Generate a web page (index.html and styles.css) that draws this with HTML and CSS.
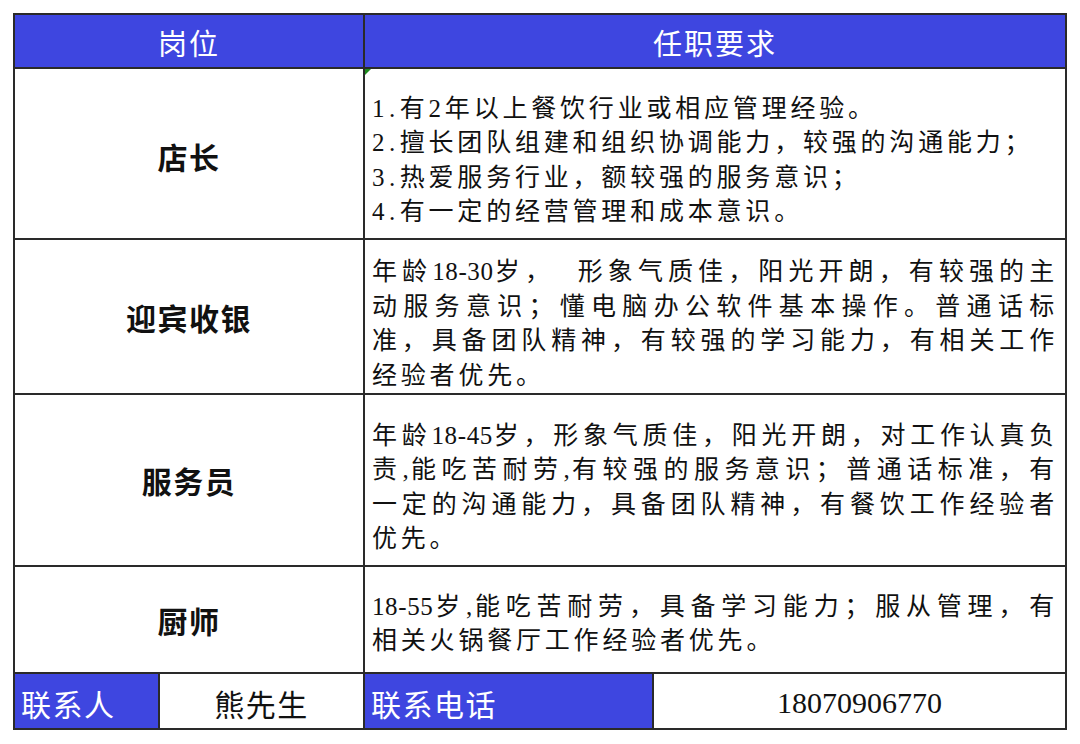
FILE: index.html
```html
<!DOCTYPE html>
<html lang="zh-CN">
<head>
<meta charset="utf-8">
<title>招聘岗位</title>
<link rel="stylesheet" href="styles.css">
</head>
<body>
<div class="sheet">
  <div class="cell head c-left">岗位</div>
  <div class="cell head c-right">任职要求</div>

  <div class="cell label c-left r1">店长</div>
  <div class="cell req c-right r1">
    <span class="flag"></span>
    <div class="txt">
      <div><span class="idx">1.</span>有2年以上餐饮行业或相应管理经验。</div>
      <div><span class="idx">2.</span>擅长团队组建和组织协调能力，较强的沟通能力；</div>
      <div><span class="idx">3.</span>热爱服务行业，额较强的服务意识；</div>
      <div><span class="idx">4.</span>有一定的经营管理和成本意识。</div>
    </div>
  </div>

  <div class="cell label c-left r2">迎宾收银</div>
  <div class="cell req c-right r2">
    <div class="txt">
      <div class="just">年龄<span class="num">18-30</span>岁，&nbsp;&nbsp;形象气质佳，阳光开朗，有较强的主</div>
      <div class="just">动服务意识；懂电脑办公软件基本操作。普通话标</div>
      <div class="just">准，具备团队精神，有较强的学习能力，有相关工作</div>
      <div>经验者优先。</div>
    </div>
  </div>

  <div class="cell label c-left r3">服务员</div>
  <div class="cell req c-right r3">
    <div class="txt">
      <div class="just">年龄<span class="num">18-45</span>岁，形象气质佳，阳光开朗，对工作认真负</div>
      <div class="just">责<span class="num">,</span>能吃苦耐劳<span class="num">,</span>有较强的服务意识；普通话标准，有</div>
      <div class="just">一定的沟通能力，具备团队精神，有餐饮工作经验者</div>
      <div>优先。</div>
    </div>
  </div>

  <div class="cell label c-left r4">厨师</div>
  <div class="cell req c-right r4">
    <div class="txt">
      <div class="just"><span class="num">18-55</span>岁<span class="num">,</span>能吃苦耐劳，具备学习能力；服从管理，有</div>
      <div>相关火锅餐厅工作经验者优先。</div>
    </div>
  </div>

  <div class="cell foot blue">联系人</div>
  <div class="cell foot name">熊先生</div>
  <div class="cell foot blue">联系电话</div>
  <div class="cell foot phone">18070906770</div>
</div>
</body>
</html>
```

FILE: styles.css
```css
* { box-sizing: border-box; }

html, body {
  margin: 0;
  background: #ffffff;
}

body {
  padding: 13px 0 0 13px;
  font-family: "Liberation Serif", "Noto Sans CJK SC", serif;
  color: #111111;
}

.sheet {
  width: 1054px;
  display: grid;
  grid-template-columns: 145px 205px 289px 413px;
  grid-template-rows: 54px 171px 155px 172px 107px 56px;
  border-top: 2px solid #2a2a2a;
  border-left: 2px solid #2a2a2a;
}

.cell {
  border-right: 2px solid #2a2a2a;
  border-bottom: 2px solid #2a2a2a;
  display: flex;
  align-items: center;
  position: relative;
}

.c-left { grid-column: 1 / 3; }
.c-right { grid-column: 3 / 5; }

.head {
  background: #3e46e0;
  color: #ffffff;
  justify-content: center;
  font-family: "Noto Sans CJK SC", sans-serif;
  font-size: 29px;
  letter-spacing: 2px;
  padding-top: 2px;
}

.label {
  justify-content: center;
  font-family: "Noto Sans CJK SC", sans-serif;
  font-weight: 700;
  font-size: 30px;
  letter-spacing: 1.5px;
  color: #111111;
}

.r1 { padding-top: 4px; }

.req {
  padding: 15px 7px 0 7px;
  font-size: 25px;
  letter-spacing: 3.8px;
  line-height: 34.5px;
}

.req.r1 { padding-top: 14px; }
.req.r4 { padding-top: 9px; }

.txt { width: 100%; }

.idx {
  letter-spacing: 4.5px;
}

.num {
  letter-spacing: 0.6px;
}

.just {
  text-align: justify;
  text-align-last: justify;
}

.flag {
  position: absolute;
  left: 0;
  top: 0;
  width: 0;
  height: 0;
  border-top: 6px solid #1e8c1e;
  border-right: 6px solid transparent;
}

.foot {
  font-family: "Noto Sans CJK SC", sans-serif;
  font-size: 30px;
  letter-spacing: 1.5px;
  padding-top: 4px;
}

.blue {
  background: #3e46e0;
  color: #ffffff;
  padding-left: 6px;
}

.name {
  justify-content: center;
  color: #111111;
}

.phone {
  justify-content: center;
  font-family: "Liberation Serif", serif;
  font-size: 30px;
  letter-spacing: 0;
  color: #111111;
}
```
